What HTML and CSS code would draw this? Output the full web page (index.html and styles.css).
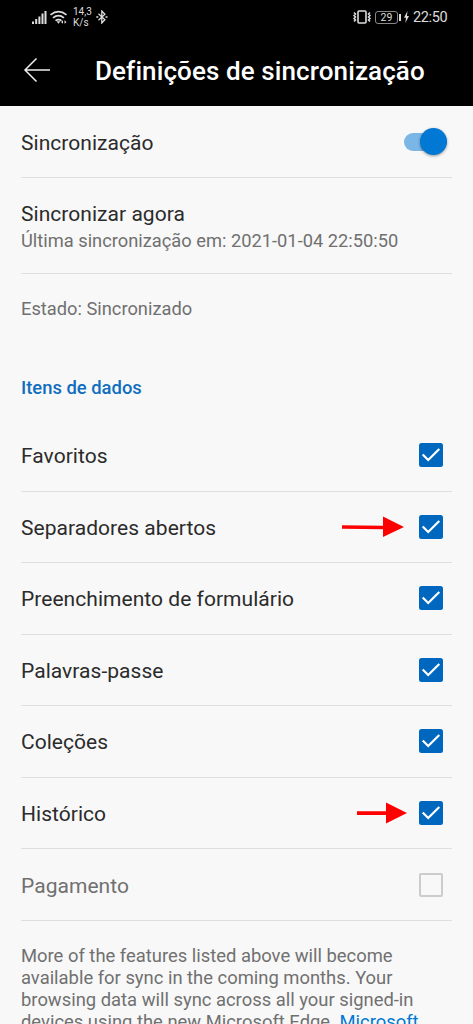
FILE: index.html
```html
<!DOCTYPE html>
<html lang="pt">
<head>
<meta charset="utf-8">
<title>Definições de sincronização</title>
<link rel="stylesheet" href="styles.css">
</head>
<body>
<svg class="defs" width="0" height="0" aria-hidden="true">
  <symbol id="check" viewBox="0 0 24 24"><rect width="24" height="24" rx="2.5" fill="#0067bf"/><path d="M3.700 11.500l5.500 5.500L20.300 6" fill="none" stroke="#fff" stroke-width="2.200"/></symbol>
</svg>
<header class="top">
  <div class="status">
    <svg class="signals" width="36" height="16" viewBox="0 0 36 16">
      <g fill="#ddd"><rect x="0" y="12.500" width="2" height="2.500"/><rect x="3.200" y="10" width="2" height="5"/><rect x="6.400" y="7.500" width="2" height="7.500"/><rect x="9.500" y="4.500" width="2" height="10.500"/><rect x="12.500" y="2" width="2" height="13"/></g>
      <g fill="none" stroke="#ddd" stroke-width="1.700"><path d="M18.500 5.800q8-6.500 16 0"/><path d="M21 8.900q5.500-4.500 11 0"/><path d="M23.500 11.700q3-2.300 6 0"/></g>
      <path d="M24.500 12.300h4l-2 2.400z" fill="#ddd"/><path d="M29 13l2-1.700v3.400zM34.500 13l-2-1.700v3.400z" fill="#ddd"/>
    </svg>
    <div class="speed"><span>14,3</span><span>K/s</span></div>
    <svg class="bluetooth" width="12" height="14" viewBox="0 0 12 14"><path d="M2.500 3.800l6.400 6L5.800 13V1l3.100 3.200-6.400 6" fill="none" stroke="#ddd" stroke-width="1.300"/><path d="M.300 7h2M9.500 7h2" stroke="#ddd" stroke-width="1.600"/></svg>
    <svg class="vibrate" width="18" height="14" viewBox="0 0 18 14"><rect x="5" y="1" width="8" height="12" rx="1" fill="none" stroke="#ddd" stroke-width="1.600"/><path d="M1 2.500l1.500 1.500L1 5.500 2.500 7 1 8.500l1.500 1.500L1 11.500M17 2.500l-1.500 1.500L17 5.500 15.500 7 17 8.500l-1.500 1.500L17 11.500" fill="none" stroke="#ddd" stroke-width="1.500"/></svg>
    <div class="battery">29</div>
    <svg class="bolt" width="5" height="12" viewBox="0 0 5 12"><path d="M3.500 0L0 6.700h2L1.300 12 5 5H2.900z" fill="#ddd"/></svg>
    <span class="clock">22:50</span>
  </div>
  <div class="bar">
    <svg class="back" width="28" height="26" viewBox="0 0 28 26"><path d="M27 13H2M13.500 1.500L2 13l11.500 11.500" fill="none" stroke="#eee" stroke-width="1.500"/></svg>
    <h1>Definições de sincronização</h1>
  </div>
</header>
<main>
  <div class="row sync"><span>Sincronização</span><span class="switch"><i class="knob"></i></span></div>
  <div class="now"><div class="label">Sincronizar agora</div><div class="small">Última sincronização em: 2021-01-04 22:50:50</div></div>
  <div class="state">Estado: Sincronizado</div>
  <h2>Itens de dados</h2>
  <div class="row"><span>Favoritos</span><svg class="box"><use href="#check"/></svg></div>
  <div class="row"><span>Separadores abertos</span><svg class="arrow first" width="62" height="22" viewBox="0 0 62 22"><path d="M0 9.200L41 9.700V.500L62 11 41 21V13.200L0 12.800z" fill="#f00"/></svg><svg class="box"><use href="#check"/></svg></div>
  <div class="row"><span>Preenchimento de formulário</span><svg class="box"><use href="#check"/></svg></div>
  <div class="row"><span>Palavras-passe</span><svg class="box"><use href="#check"/></svg></div>
  <div class="row"><span>Coleções</span><svg class="box"><use href="#check"/></svg></div>
  <div class="row"><span>Histórico</span><svg class="arrow second" width="50" height="22" viewBox="0 0 50 22"><path d="M0 9.300H29V.500L50 11 29 21.500V13H0z" fill="#f00"/></svg><svg class="box"><use href="#check"/></svg></div>
  <div class="row off"><span>Pagamento</span><span class="box empty"></span></div>
  <p>More of the features listed above will become<br>available for sync in the coming months. Your<br>browsing data will sync across all your signed-in<br>devices using the new Microsoft Edge. <a>Microsoft</a></p>
</main>
</body>
</html>
```
FILE: styles.css
```css
* { box-sizing: border-box; }
body { margin: 0; height: 1024px; overflow: hidden; background: #f8f8f8; color: #2b2b2b; font-family: Roboto, sans-serif; }
.defs { display: none; }
svg { display: block; flex: none; }
.top { height: 106px; background: #000; color: #fff; }
.status { display: flex; align-items: center; height: 34px; padding-left: 32px; color: #ddd; }
.speed { display: flex; flex-direction: column; width: 19px; margin-left: 5px; font-size: 10px; line-height: 11px; white-space: nowrap; }
.bluetooth { margin-left: 4px; }
.vibrate { margin-left: 245px; }
.battery { position: relative; width: 23px; height: 13px; margin-left: 4px; border: 1px solid #888; border-radius: 3px; font-size: 10.5px; line-height: 11px; text-align: center; }
.battery::after { content: ""; position: absolute; right: -4px; top: 2px; width: 2px; height: 7px; background: #ddd; }
.bolt { margin-left: 6px; }
.clock { margin-left: 4px; font-size: 14.5px; letter-spacing: -.35px; }
.bar { display: flex; align-items: center; height: 72px; padding-left: 23px; }
h1 { margin: 2px 0 0 44px; font-size: 26px; font-weight: 500; line-height: 30px; letter-spacing: .1px; white-space: nowrap; }
main { padding: 0 21px; }
.row { display: flex; align-items: center; height: 71.550px; border-bottom: 1.500px solid #dfdfdf; font-size: 21px; letter-spacing: .04px; white-space: nowrap; }
.row > span:first-child { flex: 1; padding-top: 2px; }
.sync { height: 72px; }
.switch { position: relative; width: 43px; height: 18px; margin-right: 5px; border-radius: 9px; background: #7ab7e7; }
.knob { position: absolute; right: 0; top: -5px; width: 27px; height: 27px; border-radius: 50%; background: #0078d4; box-shadow: 0 1px 3px #0006; }
.now { height: 96px; padding-top: 24px; border-bottom: 1.500px solid #dfdfdf; white-space: nowrap; }
.label { font-size: 21px; line-height: 25px; letter-spacing: .04px; }
.small, .state, p { color: #707070; font-size: 18.300px; }
.small { line-height: 27px; }
.state { padding-top: 23px; line-height: 24px; }
h2 { margin: 55px 0 0; padding-bottom: 20px; color: #106ebe; font-size: 18.400px; font-weight: 500; line-height: 24px; }
.box { width: 24px; height: 24px; margin-right: 9px; }
.empty { border: 2px solid #ccc; border-radius: 2px; }
.first { margin-right: 15px; }
.second { margin-right: 12px; }
.off { color: #707070; }
p { margin: 24px 0 0; font-size: 18.400px; line-height: 22px; white-space: nowrap; }
a { color: #0078d4; }
```
